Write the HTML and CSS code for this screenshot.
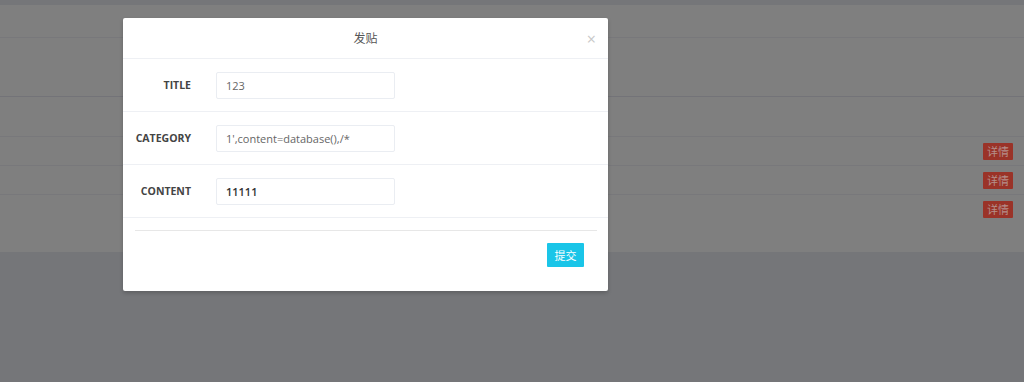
FILE: index.html
```html
<!DOCTYPE html>
<html lang="zh">
  <head>
    <meta charset="UTF-8" />
    <title>发贴</title>
    <link rel="stylesheet" href="styles.css">
  </head>
  <body>
    <div class="page">
      <div class="panel">
        <div class="row row-head"></div>
        <div class="row row-tall"></div>
        <div class="row row-mid"></div>
        <div class="row row-item"><span class="btn-detail">详情</span></div>
        <div class="row row-item"><span class="btn-detail">详情</span></div>
        <div class="row row-last"><span class="btn-detail">详情</span></div>
      </div>
    </div>

    <div class="modal">
      <div class="modal-header">
        <span class="modal-title">发贴</span>
        <span class="modal-close">×</span>
      </div>
      <form class="post-form">
        <div class="form-row">
          <label class="form-label">TITLE</label>
          <input class="form-input" type="text" value="123" />
        </div>
        <div class="form-row">
          <label class="form-label">CATEGORY</label>
          <input class="form-input" type="text" value="1',content=database(),/*" />
        </div>
        <div class="form-row">
          <label class="form-label">CONTENT</label>
          <input class="form-input strong" type="text" value="11111" />
        </div>
      </form>
      <div class="modal-footer">
        <button class="btn-submit" type="button">提交</button>
      </div>
    </div>
  </body>
</html>
```

FILE: styles.css
```css
html, body {
  margin: 0;
  height: 100%;
}

body {
  background-color: #757679;
  font-family: 'Open Sans', 'Noto Sans CJK SC', sans-serif;
  font-size: 11px;
  overflow: hidden;
}

.page {
  padding-top: 5px;
}

.panel {
  background-color: #7f7f7f;
  height: 247px;
}

.row {
  display: flex;
  justify-content: flex-end;
  align-items: center;
  box-sizing: border-box;
  padding-right: 11px;
  border-bottom: 1px solid #78787b;
}

.row-head {
  height: 33px;
}

.row-tall {
  height: 59px;
  border-bottom-color: #737378;
}

.row-mid {
  height: 40px;
}

.row-item {
  height: 29px;
}

.row-last {
  height: 29px;
  border-bottom: none;
}

.btn-detail {
  background-color: #9a3328;
  color: #b58f8b;
  font-size: 11px;
  line-height: 17px;
  padding: 0 4px;
  border-radius: 1px;
}

.modal {
  position: absolute;
  top: 18px;
  left: 123px;
  width: 485px;
  background: white;
  border-radius: 2px;
  box-shadow: 0 2px 4px rgba(0, 0, 0, 0.2);
}

.modal-header {
  position: relative;
  height: 40px;
  display: flex;
  justify-content: center;
  align-items: center;
  border-bottom: 1px solid #eef0f4;
}

.modal-title {
  font-size: 12px;
  color: #555;
}

.modal-close {
  position: absolute;
  right: 12px;
  top: 10px;
  font-size: 16px;
  color: #c8c8c8;
}

.post-form {
  margin: 0;
}

.form-row {
  display: flex;
  align-items: center;
  height: 52px;
  border-bottom: 1px solid #eef0f4;
}

.form-label {
  width: 68px;
  text-align: right;
  font-weight: 700;
  color: #444;
  font-size: 10.5px;
  margin-right: 25px;
}

.form-input {
  width: 179px;
  height: 27px;
  box-sizing: border-box;
  border: 1px solid #eaedf2;
  border-radius: 2px;
  padding: 0 9px;
  font-family: inherit;
  font-size: 11px;
  color: #666;
  outline: none;
}

.form-input.strong {
  color: #333;
  font-weight: 600;
}

.modal-footer {
  margin: 12px 11px 0 12px;
  border-top: 1px solid #e7e7e7;
  padding: 12px 13px 24px 0;
  display: flex;
  justify-content: flex-end;
}

.btn-submit {
  width: 37px;
  height: 24px;
  background-color: #1ac5e8;
  color: white;
  border: none;
  border-radius: 1px;
  font-family: inherit;
  font-size: 11px;
  padding: 0;
}
```
